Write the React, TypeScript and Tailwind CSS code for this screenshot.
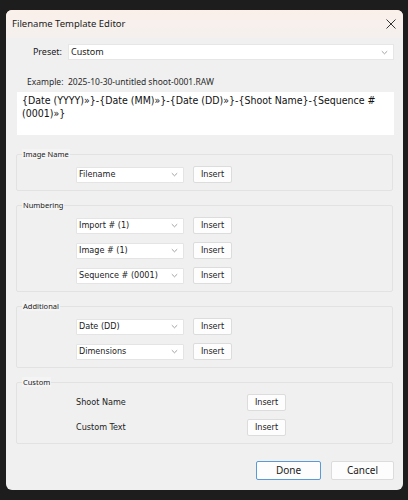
import React from "react";

const ui = { fontFamily: '"Noto Sans", "Open Sans", sans-serif' };
const tah = { fontFamily: '"DejaVu Sans Condensed", "DejaVu Sans", sans-serif' };

function Chevron() {
  return (
    <svg width="7" height="5" viewBox="0 0 7 5" className="shrink-0">
      <path d="M0.8 1.2 L3.5 3.8 L6.2 1.2" fill="none" stroke="#8a8a8a" strokeWidth="0.8" />
    </svg>
  );
}

function Select({ value, w = "w-[108px]" }: { value: string; w?: string }) {
  return (
    <div
      className={`${w} h-[16px] bg-white border border-[#e4e4e4] rounded-[1px] flex items-center justify-between pl-[2px] pr-[5px] text-[9px] text-[#222]`}
      style={tah}
    >
      <span>{value}</span>
      <Chevron />
    </div>
  );
}

function InsertBtn() {
  return (
    <div
      className="w-[39px] h-[17px] bg-[#fdfdfd] border border-[#dcdcdc] rounded-[2px] flex items-center justify-center text-[9px] text-[#222]"
      style={tah}
    >
      Insert
    </div>
  );
}

function Group({ title, children }: { title: string; children: React.ReactNode }) {
  return (
    <fieldset className="border border-[#e2e2e2] rounded-[2px] mx-[10px] pt-[7px] pb-[7px]">
      <legend className="ml-[5px] px-[1px] text-[7.5px] leading-[10px] text-[#1b1b1b] bg-[#f4f4f4]" style={ui}>
        {title}
      </legend>
      <div className="flex flex-col gap-[8px] pl-[59px]">{children}</div>
    </fieldset>
  );
}

function Row({ value }: { value: string }) {
  return (
    <div className="flex items-center gap-[9px] h-[17px]">
      <Select value={value} />
      <InsertBtn />
    </div>
  );
}

function TextRow({ label }: { label: string }) {
  return (
    <div className="flex items-center h-[17px]">
      <span className="w-[171px] text-[9px] text-[#222]" style={tah}>{label}</span>
      <InsertBtn />
    </div>
  );
}

export default function App() {
  return (
    <div className="w-[408px] h-[500px] bg-[#1d1d1d] pt-[10px] pl-[6px] overflow-hidden relative">
      <div className="w-[397px] h-[480px] rounded-[6px] bg-[#f0f0f0] flex flex-col overflow-hidden">
        <div className="h-[28px] bg-gradient-to-b from-[#fbf0ea] to-[#f4f0ee] flex items-center justify-between pl-[6px] pr-[7px] shrink-0">
          <span className="text-[9.5px] text-[#1b1b1b]" style={ui}>Filename Template Editor</span>
          <svg width="10" height="10" viewBox="0 0 10 10">
            <path d="M0.5 0.5 L9.5 9.5 M9.5 0.5 L0.5 9.5" stroke="#333" strokeWidth="1" />
          </svg>
        </div>

        <div className="flex items-center mt-[6px] h-[16px]">
          <span className="w-[57px] text-right pr-[1px] text-[9px] text-[#1b1b1b]" style={ui}>Preset:</span>
          <div className="ml-[5px] w-[326px] h-[16px] bg-white border border-[#e6e6e6] flex items-center justify-between pl-[2px] pr-[5px]">
            <span className="text-[9px] text-[#1b1b1b]" style={ui}>Custom</span>
            <Chevron />
          </div>
        </div>

        <div className="flex items-center mt-[16px] h-[12px] text-[8.5px] text-[#2a2a2a]" style={ui}>
          <span className="w-[62px] pl-[21px]">Example:</span>
          <span>2025-10-30-untitled shoot-0001.RAW</span>
        </div>

        <div
          className="mt-[4px] ml-[11px] w-[377px] h-[43px] bg-white px-[5px] pt-[2px] text-[10.5px] leading-[13px] text-[#111]"
          style={tah}
        >
          {"{Date (YYYY)»}-{Date (MM)»}-{Date (DD)»}-{Shoot Name}-{Sequence # (0001)»}"}
        </div>

        <div className="mt-[14px] flex flex-col gap-[9px]">
          <Group title="Image Name">
            <Row value="Filename" />
          </Group>
          <Group title="Numbering">
            <Row value="Import # (1)" />
            <Row value="Image # (1)" />
            <Row value="Sequence # (0001)" />
          </Group>
          <Group title="Additional">
            <Row value="Date (DD)" />
            <Row value="Dimensions" />
          </Group>
          <Group title="Custom">
            <TextRow label="Shoot Name" />
            <TextRow label="Custom Text" />
          </Group>
        </div>

        <div className="flex justify-end gap-[10px] pr-[9px] mt-[17px]">
          <div className="w-[65px] h-[19px] bg-[#fdfdfd] border border-[#5b9bd5] rounded-[2px] flex items-center justify-center text-[10px] text-[#1b1b1b]" style={ui}>
            Done
          </div>
          <div className="w-[63px] h-[19px] bg-[#fdfdfd] border border-[#dcdcdc] rounded-[2px] flex items-center justify-center text-[10px] text-[#1b1b1b]" style={ui}>
            Cancel
          </div>
        </div>
      </div>
    </div>
  );
}
